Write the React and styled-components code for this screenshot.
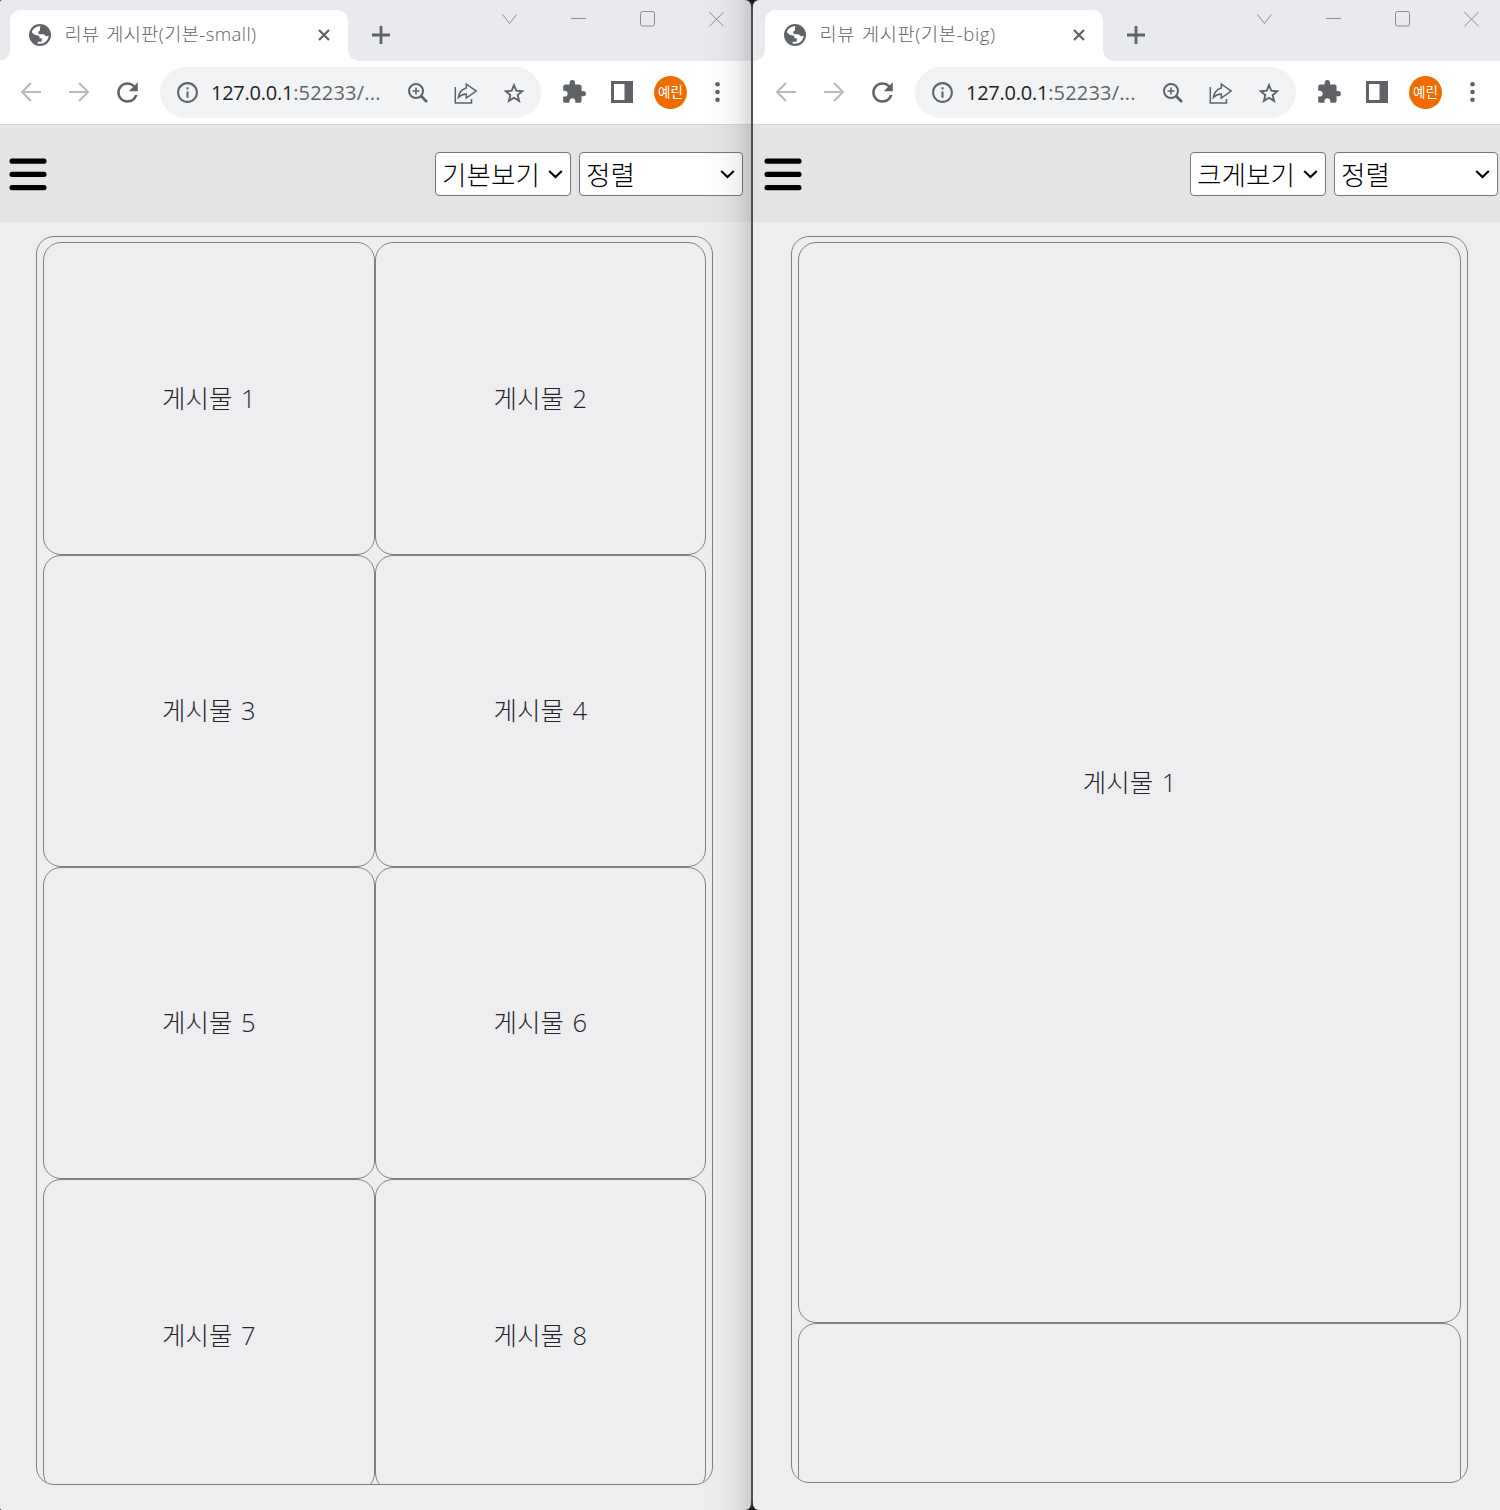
import React from "react";
import styled, { createGlobalStyle } from "styled-components";
import { MdRefresh, MdInfoOutline, MdExtension } from "react-icons/md";

const Global = createGlobalStyle`
  *, *::before, *::after { box-sizing: border-box; }
  body { margin: 0; background: #4e5052; font-family: "Open Sans", "Noto Sans CJK KR", sans-serif; }
  svg { display: block; flex: none; }
`;

const Desktop = styled.div`
  display: flex;
  gap: 2px;
  width: 1500px;
  height: 1510px;
  overflow: hidden;
  background: linear-gradient(#161616, #4e5052 10px calc(100% - 10px), #161616);
`;

const Window = styled.section`
  position: relative;
  flex: none;
  width: ${(p) => p.$width}px;
  height: 1510px;
  padding-left: ${(p) => p.$inset}px;
  display: flex;
  flex-direction: column;
  overflow: hidden;
  border-radius: ${(p) => p.$corners};
  background: linear-gradient(#e8eaed 0 61px, #fff 61px 124px, #d5d6d8 124px 125px, #e4e4e6 125px 222px, #eeeef0 222px);
`;

const EdgeShadow = styled.div`
  position: absolute;
  top: 0;
  right: 0;
  bottom: 0;
  width: 50px;
  pointer-events: none;
  background: linear-gradient(to right, rgba(0, 0, 0, 0), rgba(0, 0, 0, 0.015) 40%, rgba(0, 0, 0, 0.05) 70%, rgba(0, 0, 0, 0.14));
`;

const TabStrip = styled.div`
  flex: none;
  display: flex;
  width: 747px;
  height: 61px;
  padding: 10px 0 0 10px;
`;

const Tab = styled.div`
  position: relative;
  display: flex;
  align-items: center;
  width: 338px;
  height: 51px;
  padding: 0 17.5px 1px 19px;
  border-radius: 11px 11px 0 0;
  background: #fff;
  color: #5f6368;
  &::before, &::after {
    content: "";
    position: absolute;
    bottom: 0;
    width: 11px;
    height: 11px;
  }
  &::before { left: -11px; background: radial-gradient(circle at 0 0, transparent 10.5px, #fff 11px); }
  &::after { right: -11px; background: radial-gradient(circle at 100% 0, transparent 10.5px, #fff 11px); }
`;

const TabTitle = styled.span`
  flex: 1;
  margin: -2px 0 0 13.5px;
  font-size: 18.6px;
  font-weight: 300;
  line-height: 28px;
  white-space: nowrap;
  word-spacing: 1.6px;
  letter-spacing: ${(p) => p.$track}px;
`;

const NewTab = styled.div`
  padding: 16px 0 0 23.5px;
`;

const Controls = styled.div`
  display: flex;
  gap: 54px;
  margin-left: auto;
  padding: 1px 23px 0 0;
`;

const Toolbar = styled.div`
  flex: none;
  display: flex;
  align-items: center;
  width: 747px;
  height: 64px;
  padding: 0 0 2px 20px;
  color: #5f6368;
`;

const NavButtons = styled.div`
  display: flex;
  align-items: center;
  gap: 26px;
  width: 140px;
`;

const Reload = styled(MdRefresh)`
  margin-left: -4px;
`;

const AddressBar = styled.div`
  display: flex;
  align-items: center;
  width: 381px;
  height: 51px;
  margin-top: 1px;
  padding: 0 16px 0 15px;
  border-radius: 26px;
  background: #f1f3f4;
`;

const Url = styled.span`
  flex: 1;
  margin-left: 11px;
  padding-top: 1px;
  font-size: 20px;
  line-height: 28px;
  white-space: nowrap;
  color: #5f6368;
  letter-spacing: 0.2px;
  b { font-weight: 400; color: #202124; letter-spacing: -0.25px; }
`;

const AddressActions = styled.div`
  display: flex;
  align-items: center;
  gap: 25px;
`;

const Extensions = styled.div`
  display: flex;
  align-items: center;
  gap: 24px;
  padding-left: 20px;
`;

const Avatar = styled.span`
  display: grid;
  place-items: center;
  width: 33px;
  height: 33px;
  margin: 1px 4px 0 -3px;
  padding-bottom: 1px;
  border-radius: 50%;
  background: #ef6c00;
  color: #fff;
  font-size: 13.5px;
  line-height: 20px;
`;

const PageHeader = styled.header`
  flex: none;
  display: flex;
  align-items: center;
  justify-content: space-between;
  width: 743px;
  height: 97px;
  padding-left: 9px;
`;

const Filters = styled.div`
  display: flex;
  gap: 8px;
`;

const SelectBox = styled.label`
  display: grid;
  align-items: center;
  width: ${(p) => p.$width}px;
  height: 44px;
  > * { grid-area: 1 / 1; }
  svg { justify-self: end; margin-right: 8px; pointer-events: none; }
`;

const Select = styled.select`
  appearance: none;
  width: 100%;
  height: 44px;
  margin: 0;
  padding: 1px 0 0 6px;
  border: 1px solid #767676;
  border-radius: 4px;
  background: #fff;
  color: #000;
  font: 300 26.6px/40px "Noto Sans CJK KR", sans-serif;
`;

const Board = styled.main`
  flex: none;
  width: 677px;
  height: ${(p) => p.$height}px;
  margin: 14px 0 0 36px;
  padding: 5px 6px 0;
  border: 1px solid #808080;
  border-radius: 18px;
  overflow: hidden;
  display: grid;
  grid-template-columns: repeat(${(p) => p.$columns}, 1fr);
  grid-template-rows: ${(p) => p.$rows};
`;

const Card = styled.article`
  display: grid;
  place-items: center;
  padding-bottom: ${(p) => p.$lift}px;
  border: 1px solid #808080;
  border-radius: 18px;
  color: #212529;
  font-size: 25.5px;
  font-weight: 300;
  line-height: 36px;
  word-spacing: 2px;
`;

const Globe = () => (
  <svg width="22" height="22" viewBox="0 0 22 22">
    <circle cx="11" cy="11" r="11" fill="#5f6368" />
    <path
      d="M11.500 2.300C7 2.200 3.800 4.800 2.800 8.200L5 10.300c1 .9 2 .9 3 .9 1.600 0 2.500.8 2.500 2.300v.8h2.300v2.400c0 .6-.4 1-1 1H8.600v1.700c5.700 1.300 10.800-2.500 11.100-8-1 1-2.900 1-3.800-.2-.5-.7-1.300-1-2.200-1h-2.500c-1.200 0-2-.7-2-1.800 0-1 .8-1.700 1.800-1.700V4.300c0-.8.2-1.400.5-2z"
      fill="#fff"
    />
  </svg>
);

const Stroke = ({ w, h, d, color = "#5f6368", sw = 2 }) => (
  <svg width={w} height={h} viewBox={`0 0 ${w} ${h}`} fill="none" stroke={color} strokeWidth={sw}>
    <path d={d} />
  </svg>
);

const ZoomIcon = () => (
  <svg width="22" height="22" viewBox="0 0 22 22" fill="none" stroke="#5f6368">
    <circle cx="9" cy="9" r="7" strokeWidth="2" />
    <path d="M5.500 9h7M9 5.500v7" strokeWidth="1.600" />
    <path d="M14 14l6 6" strokeWidth="2.600" />
  </svg>
);

const ShareIcon = () => (
  <Stroke w={24} h={22} sw={1.5} d="M1.300 5v16h16.200v-4M12.300 2l9.900 7.100-9.900 7v-4c-3.800.2-5.700 1-7.900 3.400.6-4.700 2.900-8 7.900-9.500z" />
);

const StarIcon = () => (
  <Stroke w={22} h={22} sw={1.9} d="M11 3.200l2.300 5.500 5.900.5-4.500 3.900 1.400 5.800-5.100-3.100-5.100 3.100 1.400-5.800-4.500-3.900 5.900-.5z" />
);

const SidePanelIcon = () => (
  <svg width="22" height="22" viewBox="0 0 22 22">
    <path fill="#5f6368" fillRule="evenodd" d="M0 0h22v22H0zM3 3v16h10.500V3z" />
  </svg>
);

const MenuDots = () => (
  <svg width="5" height="22" viewBox="0 0 5 22" fill="#5f6368">
    <circle cx="2.500" cy="3.300" r="2.300" />
    <circle cx="2.500" cy="11" r="2.300" />
    <circle cx="2.500" cy="18.700" r="2.300" />
  </svg>
);

const Hamburger = () => (
  <svg width="38" height="34" viewBox="0 0 38 34">
    <rect x="0.500" y="1.600" width="37" height="5.200" rx="2.500" />
    <rect x="0.500" y="14.800" width="37" height="5.200" rx="2.500" />
    <rect x="0.500" y="28" width="37" height="5.200" rx="2.500" />
  </svg>
);

const Dropdown = ({ width, value }) => (
  <SelectBox $width={width}>
    <Select defaultValue={value}>
      <option>{value}</option>
    </Select>
    <Stroke w={15} h={12} sw={2.1} color="#000" d="M1.200 3l6.300 6 6.300-6" />
  </SelectBox>
);

const Browser = ({ width, inset, corners, title, track, view, columns, rows, height, posts, shadow }) => (
  <Window $width={width} $inset={inset} $corners={corners}>
    <TabStrip>
      <Tab>
        <Globe />
        <TabTitle $track={track}>{title}</TabTitle>
        <Stroke w={14} h={14} sw={2.2} d="M2 2l10 10M12 2L2 12" />
      </Tab>
      <NewTab>
        <Stroke w={18} h={18} sw={2.8} d="M9 0v18M0 9h18" />
      </NewTab>
      <Controls>
        <Stroke w={15} h={16} sw={1} color="#8b8c8f" d="M.500 3.500l7 9 7-9" />
        <Stroke w={15} h={16} sw={1} color="#8b8c8f" d="M0 7.500h15" />
        <Stroke w={15} h={16} sw={1} color="#8b8c8f" d="M2.500.500h10q2 0 2 2v10.500q0 2-2 2h-10q-2 0-2-2v-10.500q0-2 2-2z" />
        <Stroke w={15} h={16} sw={1} color="#8b8c8f" d="M.300 1l14.400 14.400M14.700 1L.300 15.400" />
      </Controls>
    </TabStrip>
    <Toolbar>
      <NavButtons>
        <Stroke w={22} h={20} color="#bababa" d="M21 10H2.500M11 1L2 10l9 9" />
        <Stroke w={22} h={20} color="#bababa" d="M1 10h18.500M11 1l9 9-9 9" />
        <Reload size={31} />
      </NavButtons>
      <AddressBar>
        <MdInfoOutline size={25} />
        <Url><b>127.0.0.1</b>:52233/...</Url>
        <AddressActions>
          <ZoomIcon />
          <ShareIcon />
          <StarIcon />
        </AddressActions>
      </AddressBar>
      <Extensions>
        <MdExtension size={26} />
        <SidePanelIcon />
        <Avatar>예린</Avatar>
        <MenuDots />
      </Extensions>
    </Toolbar>
    <PageHeader>
      <Hamburger />
      <Filters>
        <Dropdown width={136} value={view} />
        <Dropdown width={164} value="정렬" />
      </Filters>
    </PageHeader>
    <Board $columns={columns} $rows={rows} $height={height}>
      {posts.map((post, i) => (
        <Card key={i} $lift={post.lift}>{post.label}</Card>
      ))}
    </Board>
    {shadow && <EdgeShadow />}
  </Window>
);

const smallPosts = [1, 2, 3, 4, 5, 6, 7, 8].map((n) => ({
  label: `게시물 ${n}`,
  lift: n > 2 && n < 7 ? 2 : 1,
}));
const bigPosts = [{ label: "게시물 1", lift: 1 }, { label: "", lift: 1 }];

export default function App() {
  return (
    <>
      <Global />
      <Desktop>
        <Browser width={751} inset={0} corners="2px 6px 6px 2px" title="리뷰 게시판(기본-small)" track={0.4}
          view="기본보기" columns={2} rows="313px repeat(3, 312px)" height={1249} posts={smallPosts} shadow />
        <Browser width={747} inset={2} corners="6px 0 0 6px" title="리뷰 게시판(기본-big)" track={0.65}
          view="크게보기" columns={1} rows="repeat(2, 1081px)" height={1247} posts={bigPosts} />
      </Desktop>
    </>
  );
}
